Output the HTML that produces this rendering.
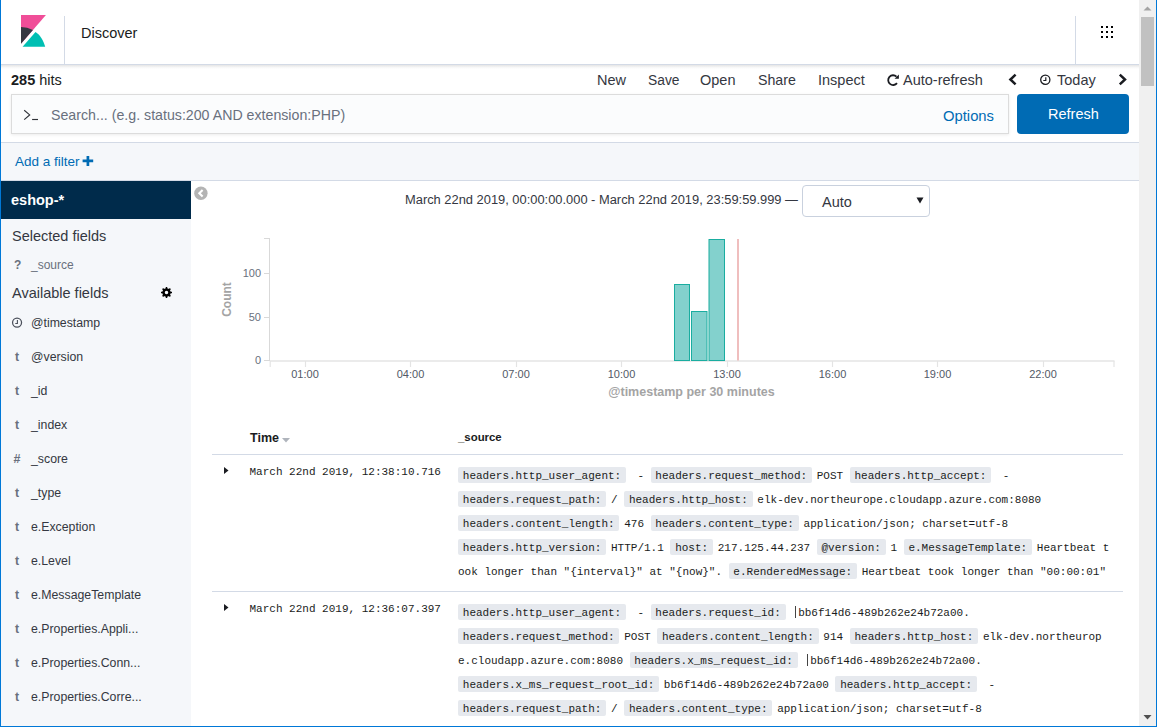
<!DOCTYPE html>
<html><head><meta charset="utf-8">
<style>
*{box-sizing:border-box;margin:0;padding:0}
html,body{width:1157px;height:727px;overflow:hidden;background:#fff}
body{position:relative;font-family:"Liberation Sans",sans-serif;color:#343741}
.a{position:absolute}
.t{position:absolute;white-space:nowrap;line-height:1}
.mono{font-family:"Liberation Mono",monospace}
.fi{left:15px;font-size:12.2px;font-weight:bold;color:#69707d}
.fn{left:31px;font-size:12.3px;color:#343741}
.dl{position:absolute;white-space:pre;font-size:11px;line-height:16px;height:16px;color:#1a1c21}
.dl i{font-style:normal;display:inline-block;height:15.5px;background:#e6e9ee;border-radius:2px;padding:1px 4.8px 0;margin-right:4.8px;vertical-align:top}
.dl em{font-style:normal;display:inline-block;padding-top:1px;margin-right:6.5px;vertical-align:top}
.bar{display:inline-block;width:3.6px;height:11.5px;vertical-align:top;margin-top:1px;border-left:1px solid #444;margin-left:4.2px}
</style></head><body>

<!-- header -->
<div class="a" style="left:0;top:0;width:1157px;height:64px;background:#fff"></div>
<div class="a" style="left:0;top:64px;width:1157px;height:1px;background:#d3dae6"></div>
<div class="a" style="left:0;top:65px;width:1157px;height:4px;background:linear-gradient(rgba(0,0,0,0.1),rgba(0,0,0,0.03) 60%,rgba(0,0,0,0))"></div>
<svg class="a" style="left:17px;top:15px" width="32" height="33" viewBox="0 0 32 33"><path fill="#F04E98" d="M4 0v28.789L28.935.017z"/><path d="M4 12v16.789l11.906-13.738A24.721 24.721 0 0 0 4 12" fill="#343741"/><path d="M18.479 16.9L5.6 31.8h22.6c-1.5-5.846-5.2-12.3-9.7-14.9" fill="#00BFB3"/></svg>
<div class="a" style="left:64px;top:16px;width:1px;height:48px;background:#d3dae6"></div>
<div class="t" style="left:81px;top:26px;font-size:14.5px;color:#1a1c21">Discover</div>
<div class="a" style="left:1075px;top:16px;width:1px;height:48px;background:#d3dae6"></div>
<svg class="a" style="left:1101px;top:26px" width="12" height="12"><g fill="#000"><rect x="0" y="0" width="2" height="2"/><rect x="5" y="0" width="2" height="2"/><rect x="10" y="0" width="2" height="2"/><rect x="0" y="5" width="2" height="2"/><rect x="5" y="5" width="2" height="2"/><rect x="10" y="5" width="2" height="2"/><rect x="0" y="10" width="2" height="2"/><rect x="5" y="10" width="2" height="2"/><rect x="10" y="10" width="2" height="2"/></g></svg>

<!-- top nav -->
<div class="t" style="left:11px;top:73px;font-size:14.5px;color:#1a1c21"><b>285</b> hits</div>
<div class="t" style="left:597px;top:73px;font-size:14.5px">New</div>
<div class="t" style="left:648px;top:74px;font-size:13.8px">Save</div>
<div class="t" style="left:700px;top:73px;font-size:14.5px">Open</div>
<div class="t" style="left:758px;top:73px;font-size:14.2px">Share</div>
<div class="t" style="left:818px;top:73px;font-size:14.5px">Inspect</div>
<svg class="a" style="left:887px;top:74px" width="13" height="13" viewBox="0 0 13 13"><path d="M9.5 2.6A4.9 4.9 0 1 0 10 9.1" fill="none" stroke="#1a1c21" stroke-width="1.8"/><path d="M11.9 0.4V4.8H7.6z" fill="#1a1c21"/></svg>
<div class="t" style="left:903px;top:73px;font-size:14.5px">Auto-refresh</div>
<svg class="a" style="left:1007px;top:72px" width="12" height="15" viewBox="0 0 12 15"><path d="M8.6 2.6L3.4 7.5L8.6 12.4" fill="none" stroke="#1a1c21" stroke-width="2.5"/></svg>
<svg class="a" style="left:1039px;top:74px" width="12" height="12" viewBox="0 0 12 12"><circle cx="6.3" cy="5.8" r="4.6" fill="none" stroke="#1a1c21" stroke-width="1.3"/><path d="M6.8 3.2V6.5H4.3" fill="none" stroke="#1a1c21" stroke-width="1.2"/></svg>
<div class="t" style="left:1057px;top:73px;font-size:14.5px">Today</div>
<svg class="a" style="left:1116px;top:72px" width="12" height="15" viewBox="0 0 12 15"><path d="M3.8 2.6L9 7.5L3.8 12.4" fill="none" stroke="#1a1c21" stroke-width="2.5"/></svg>

<!-- search -->
<div class="a" style="left:11px;top:94px;width:998px;height:40px;background:#fbfcfd;border:1px solid #dcdcdc;box-shadow:0 1px 3px rgba(0,0,0,0.08)"></div>
<svg class="a" style="left:23px;top:109px" width="16" height="13" viewBox="0 0 16 13"><path d="M1.2 1.2L6.7 5.9L1.2 10.6" fill="none" stroke="#2f3238" stroke-width="1.15"/><path d="M9.1 10.5H15" stroke="#2f3238" stroke-width="1.15"/></svg>
<div class="t" style="left:51px;top:108px;font-size:14.2px;color:#69707d">Search... (e.g. status:200 AND extension:PHP)</div>
<div class="t" style="left:943px;top:109px;font-size:14.8px;color:#006bb4">Options</div>
<div class="a" style="left:1017px;top:94px;width:112px;height:40px;background:#006bb4;border-radius:4px"></div>
<div class="t" style="left:1048px;top:107px;font-size:14.5px;color:#fff">Refresh</div>

<!-- filter bar -->
<div class="a" style="left:0;top:142px;width:1139px;height:39px;background:#f5f7fa;border-top:1px solid #d3dae6;border-bottom:1px solid #d3dae6"></div>
<div class="t" style="left:15px;top:155px;font-size:13.5px;color:#006bb4">Add a filter</div>
<svg class="a" style="left:82px;top:155px" width="12" height="12" viewBox="0 0 12 12"><path d="M5.9 0.9V10.9M0.6 5.9H11.2" stroke="#006bb4" stroke-width="2.7"/></svg>

<!-- sidebar -->
<div class="a" style="left:0;top:181px;width:191px;height:546px;background:#f5f7fa"></div>
<div class="a" style="left:0;top:181px;width:191px;height:38px;background:#002b4b"></div>
<div class="t" style="left:11px;top:193px;font-size:14.5px;font-weight:bold;color:#fff">eshop-*</div>
<div class="t" style="left:12px;top:229px;font-size:14.5px;color:#343741">Selected fields</div>
<div class="t" style="left:14px;top:259px;font-size:12px;font-weight:bold;color:#69707d">?</div>
<div class="t" style="left:31px;top:259px;font-size:12px;color:#69707d">_source</div>
<div class="t" style="left:12px;top:286px;font-size:14.5px;color:#343741">Available fields</div>
<svg class="a" style="left:161px;top:287px" width="11" height="11" viewBox="0 0 11 11"><circle cx="5.5" cy="5.5" r="3" fill="none" stroke="#000" stroke-width="2.5"/><g stroke="#000" stroke-width="1.5"><path d="M5.5 0V2.5M5.5 8.5V11M0 5.5H2.5M8.5 5.5H11M1.6 1.6L3.3 3.3M7.7 7.7L9.4 9.4M9.4 1.6L7.7 3.3M3.3 7.7L1.6 9.4"/></g></svg>

<!--FIELDS-->
<svg class="a" style="left:11px;top:317px" width="12" height="12" viewBox="0 0 12 12"><circle cx="6.05" cy="5.55" r="4.5" fill="none" stroke="#4a4f5a" stroke-width="1.25"/><path d="M6.4 3V6.5H4.3" fill="none" stroke="#4a4f5a" stroke-width="1.1"/></svg>
<div class="t fn" style="top:317.0px">@timestamp</div>
<div class="t fi" style="top:351.0px">t</div>
<div class="t fn" style="top:351.0px">@version</div>
<div class="t fi" style="top:385.0px">t</div>
<div class="t fn" style="top:385.0px">_id</div>
<div class="t fi" style="top:419.0px">t</div>
<div class="t fn" style="top:419.0px">_index</div>
<div class="t fi" style="top:453.0px;left:13.5px;font-size:12.5px">#</div>
<div class="t fn" style="top:453.0px">_score</div>
<div class="t fi" style="top:487.0px">t</div>
<div class="t fn" style="top:487.0px">_type</div>
<div class="t fi" style="top:521.0px">t</div>
<div class="t fn" style="top:521.0px">e.Exception</div>
<div class="t fi" style="top:555.0px">t</div>
<div class="t fn" style="top:555.0px">e.Level</div>
<div class="t fi" style="top:589.0px">t</div>
<div class="t fn" style="top:589.0px">e.MessageTemplate</div>
<div class="t fi" style="top:623.0px">t</div>
<div class="t fn" style="top:623.0px">e.Properties.Appli...</div>
<div class="t fi" style="top:657.0px">t</div>
<div class="t fn" style="top:657.0px">e.Properties.Conn...</div>
<div class="t fi" style="top:691.0px">t</div>
<div class="t fn" style="top:691.0px">e.Properties.Corre...</div>
<!--/FIELDS-->

<!-- collapse icon -->
<svg class="a" style="left:194px;top:186px" width="14" height="15" viewBox="0 0 14 15"><circle cx="6.9" cy="7.3" r="6.7" fill="#b4b4b4"/><path d="M8.6 4L5.3 7.3L8.6 10.6" fill="none" stroke="#fff" stroke-width="2.1"/></svg>

<!-- chart header -->
<div class="t" style="left:405px;top:194px;font-size:12.88px;color:#343741">March 22nd 2019, 00:00:00.000 - March 22nd 2019, 23:59:59.999 —</div>
<div class="a" style="left:802px;top:185px;width:128px;height:32px;border:1px solid #c9d1de;border-radius:4px;background:#fff"></div>
<div class="t" style="left:822px;top:195px;font-size:14.5px;color:#343741">Auto</div>
<svg class="a" style="left:916px;top:197px" width="8" height="7" viewBox="0 0 8 7"><path d="M0.5 0.5H7.5L4 6.5z" fill="#1a1c21"/></svg>

<!-- chart -->
<svg class="a" style="left:200px;top:230px" width="939" height="175" viewBox="200 230 939 175" font-family="Liberation Sans">
  <g stroke="#d9d9d9" stroke-width="1" fill="none">
    <path d="M269.5 238V361"/>
    <path d="M264 238.5H270M264 273.5H270M264 317.5H270M264 360.5H270"/>
    <path d="M270 361H1114.5" stroke="#e4e4e4" stroke-width="1.4"/>
    <path d="M270.2 361V367M305.5 361V367M410.5 361V367M516.5 361V367M621.5 361V367M727.5 361V367M832.5 361V367M937.5 361V367M1043.5 361V367M1114 361V367" stroke="#e4e4e4" stroke-width="1.2"/>
  </g>
  <g fill="#83d1cd" stroke="#1aada0" stroke-width="1">
    <rect x="674.5" y="284.5" width="15" height="76"/>
    <rect x="691.5" y="311.5" width="15.5" height="49"/>
    <rect x="709" y="239.5" width="15.5" height="121"/>
  </g>
  <path d="M738 239V360.5" stroke="#ecaeae" stroke-width="1.6"/>
  <g font-size="11" fill="#69707d" text-anchor="end">
    <text x="261" y="276.5">100</text>
    <text x="261" y="320.5">50</text>
    <text x="261" y="363.5">0</text>
  </g>
  <g font-size="11" fill="#535966" text-anchor="middle">
    <text x="305" y="377.5">01:00</text>
    <text x="410.5" y="377.5">04:00</text>
    <text x="516" y="377.5">07:00</text>
    <text x="621.5" y="377.5">10:00</text>
    <text x="727" y="377.5">13:00</text>
    <text x="832.5" y="377.5">16:00</text>
    <text x="937.5" y="377.5">19:00</text>
    <text x="1043" y="377.5">22:00</text>
  </g>
  <text x="691.5" y="396" font-size="12.5" font-weight="bold" fill="#a4a4a4" text-anchor="middle">@timestamp per 30 minutes</text>
  <text transform="translate(231 299.5) rotate(-90)" font-size="12" font-weight="bold" fill="#a4a4a4" text-anchor="middle">Count</text>
</svg>

<!-- doc table -->
<div class="t" style="left:250px;top:432px;font-size:12.5px;font-weight:bold;color:#1a1c21">Time</div>
<svg class="a" style="left:282px;top:438px" width="8" height="5" viewBox="0 0 8 5"><path d="M0 0H8L4 4.6z" fill="#afb4bc"/></svg>
<div class="t" style="left:458px;top:432px;font-size:11.4px;font-weight:bold;color:#1a1c21">_source</div>
<div class="a" style="left:212px;top:454px;width:911px;height:1px;background:#d3dae6"></div>

<!--DOCS-->
<svg class="a" style="left:224px;top:467px" width="5" height="8" viewBox="0 0 5 8"><path d="M0 0L4.5 3.5L0 7z" fill="#1a1c21"/></svg>
<div class="dl mono" style="left:249.5px;top:464px">March 22nd 2019, 12:38:10.716</div>
<div class="dl mono" style="left:458px;top:467px"><i>headers.http_user_agent:</i><em> -</em><i>headers.request_method:</i><em>POST</em><i>headers.http_accept:</i><em> -</em></div>
<div class="dl mono" style="left:458px;top:491px"><i>headers.request_path:</i><em>/</em><i>headers.http_host:</i><em>elk-dev.northeurope.cloudapp.azure.com:8080</em></div>
<div class="dl mono" style="left:458px;top:515px"><i>headers.content_length:</i><em>476</em><i>headers.content_type:</i><em>application/json; charset=utf-8</em></div>
<div class="dl mono" style="left:458px;top:539px"><i>headers.http_version:</i><em>HTTP/1.1</em><i>host:</i><em>217.125.44.237</em><i>@version:</i><em>1</em><i>e.MessageTemplate:</i><em>Heartbeat t</em></div>
<div class="dl mono" style="left:458px;top:563px"><em>ook longer than "{interval}" at "{now}".</em><i>e.RenderedMessage:</i><em>Heartbeat took longer than "00:00:01"</em></div>
<svg class="a" style="left:224px;top:604px" width="5" height="8" viewBox="0 0 5 8"><path d="M0 0L4.5 3.5L0 7z" fill="#1a1c21"/></svg>
<div class="dl mono" style="left:249.5px;top:601px">March 22nd 2019, 12:36:07.397</div>
<div class="dl mono" style="left:458px;top:604px"><i>headers.http_user_agent:</i><em> -</em><i>headers.request_id:</i><em><b class="bar"></b>bb6f14d6-489b262e24b72a00.</em></div>
<div class="dl mono" style="left:458px;top:628px"><i>headers.request_method:</i><em>POST</em><i>headers.content_length:</i><em>914</em><i>headers.http_host:</i><em>elk-dev.northeurop</em></div>
<div class="dl mono" style="left:458px;top:652px"><em>e.cloudapp.azure.com:8080</em><i>headers.x_ms_request_id:</i><em><b class="bar"></b>bb6f14d6-489b262e24b72a00.</em></div>
<div class="dl mono" style="left:458px;top:676px"><i>headers.x_ms_request_root_id:</i><em>bb6f14d6-489b262e24b72a00</em><i>headers.http_accept:</i><em> -</em></div>
<div class="dl mono" style="left:458px;top:700px"><i>headers.request_path:</i><em>/</em><i>headers.content_type:</i><em>application/json; charset=utf-8</em></div>
<div class="a" style="left:212px;top:591px;width:911px;height:1px;background:#d3dae6"></div>
<!--/DOCS-->

<!-- scrollbar -->
<div class="a" style="left:1139px;top:0;width:17px;height:726px;background:#f0f0f0"></div>
<div class="a" style="left:1141px;top:17px;width:13px;height:69px;background:#c1c1c1"></div>
<svg class="a" style="left:1139px;top:0" width="17" height="17"><path d="M4.5 10.5H12.5L8.5 6.5z" fill="#a3a3a3"/></svg>
<svg class="a" style="left:1139px;top:709px" width="17" height="17"><path d="M4.5 6H12.5L8.5 10.5z" fill="#505050"/></svg>

<!-- window borders -->
<div class="a" style="left:0;top:0;width:1px;height:727px;background:#0078d7"></div>
<div class="a" style="left:1156px;top:0;width:1px;height:727px;background:#0078d7"></div>
<div class="a" style="left:0;top:726px;width:1157px;height:1px;background:#0078d7"></div>
</body></html>
